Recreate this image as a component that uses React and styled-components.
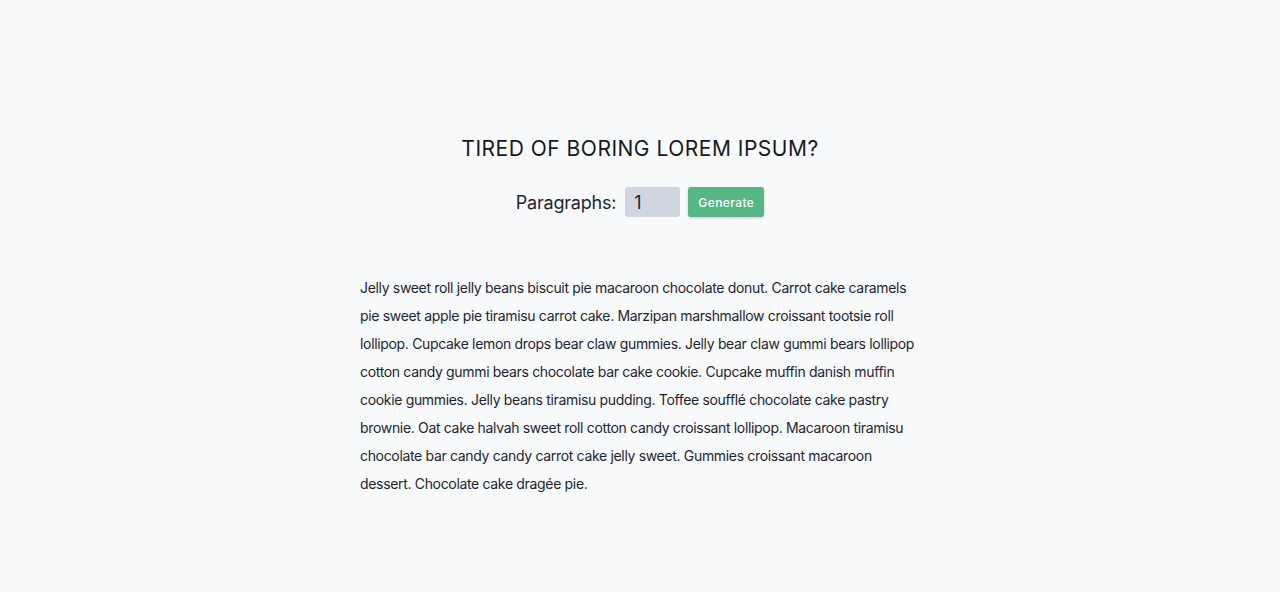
import React, { useState } from "react";
import styled, { createGlobalStyle } from "styled-components";

const text = [
  "Jelly sweet roll jelly beans biscuit pie macaroon chocolate donut. Carrot cake caramels pie sweet apple pie tiramisu carrot cake. Marzipan marshmallow croissant tootsie roll lollipop. Cupcake lemon drops bear claw gummies. Jelly bear claw gummi bears lollipop cotton candy gummi bears chocolate bar cake cookie. Cupcake muffin danish muffin cookie gummies. Jelly beans tiramisu pudding. Toffee soufflé chocolate cake pastry brownie. Oat cake halvah sweet roll cotton candy croissant lollipop. Macaroon tiramisu chocolate bar candy candy carrot cake jelly sweet. Gummies croissant macaroon dessert. Chocolate cake dragée pie.",
];

const GlobalStyle = createGlobalStyle`
  * { box-sizing: border-box; }
  body {
    margin: 0;
    background: #f8fafc;
    color: #1e2530;
    font-family: Inter, "Noto Sans", sans-serif;
  }
`;

const Section = styled.section`
  width: 560px;
  margin: 0 auto;
  padding-top: 137px;
  text-align: center;
`;

const Title = styled.h3`
  margin: 0 0 26px;
  font-size: 21px;
  font-weight: 400;
  line-height: 24px;
  letter-spacing: 0.5px;
  text-transform: uppercase;
  color: #15191f;
`;

const Form = styled.form`
  display: flex;
  justify-content: center;
  align-items: center;
  gap: 8px;
`;

const Label = styled.label`
  font-size: 18px;
  letter-spacing: -0.2px;
  margin-right: 1px;
`;

const Input = styled.input`
  width: 55px;
  height: 30px;
  border: none;
  border-radius: 3px;
  background: #cfd6df;
  padding: 0 9px;
  font-family: inherit;
  font-size: 18px;
  color: #1e2530;
  outline: none;
`;

const Button = styled.button`
  width: 76px;
  height: 30px;
  border: none;
  border-radius: 3px;
  background: #55b785;
  color: #fff;
  font-family: inherit;
  font-size: 12px;
  font-weight: 500;
  letter-spacing: 0.4px;
  box-shadow: 0 1px 3px rgba(0, 0, 0, 0.2);
  cursor: pointer;
`;

const Article = styled.article`
  margin-top: 57px;
  text-align: left;
`;

const Paragraph = styled.p`
  margin: 0;
  font-size: 14px;
  line-height: 28px;
  letter-spacing: -0.33px;
  color: #1e2530;
`;

export default function App() {
  const [count, setCount] = useState(1);
  return (
    <>
      <GlobalStyle />
      <Section>
        <Title>tired of boring lorem ipsum?</Title>
        <Form onSubmit={(e) => e.preventDefault()}>
          <Label htmlFor="amount">Paragraphs:</Label>
          <Input
            id="amount"
            type="number"
            value={count}
            onChange={(e) => setCount(e.target.value)}
          />
          <Button type="submit">Generate</Button>
        </Form>
        <Article>
          {text.slice(0, count).map((p, i) => (
            <Paragraph key={i}>{p}</Paragraph>
          ))}
        </Article>
      </Section>
    </>
  );
}
